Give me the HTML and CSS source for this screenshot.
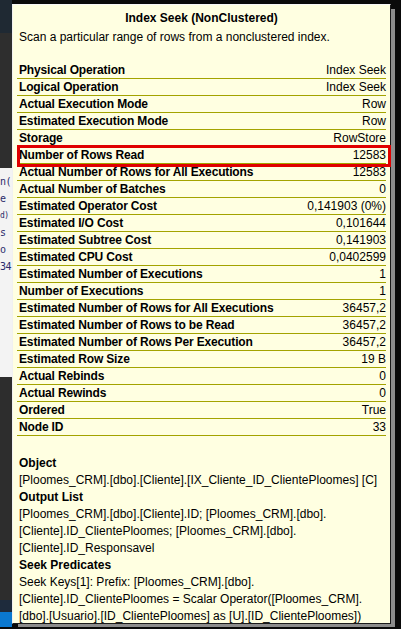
FILE: index.html
```html
<!DOCTYPE html>
<html>
<head>
<meta charset="utf-8">
<link rel="stylesheet" href="styles.css">
</head>
<body>
<div class="screen">
  <div class="backdrop">
    <div class="band band-navy"></div>
    <div class="band band-gray1"></div>
    <div class="band band-code">
      <span>n(</span><span>e</span><span class="small">d)</span><span>s</span><span>o</span><span>34</span>
    </div>
    <div class="band band-gray2"></div>
    <div class="band band-navy2"></div>
    <div class="band band-blue"></div>
  </div>
  <div class="tooltip">
    <div class="title">Index Seek (NonClustered)</div>
    <div class="desc">Scan a particular range of rows from a nonclustered index.</div>
    <div class="props">
      <div class="row"><span class="k">Physical Operation</span><span class="v">Index Seek</span></div>
      <div class="row"><span class="k">Logical Operation</span><span class="v">Index Seek</span></div>
      <div class="row"><span class="k">Actual Execution Mode</span><span class="v">Row</span></div>
      <div class="row"><span class="k">Estimated Execution Mode</span><span class="v">Row</span></div>
      <div class="row"><span class="k">Storage</span><span class="v">RowStore</span></div>
      <div class="row marked"><span class="k">Number of Rows Read</span><span class="v">12583</span></div>
      <div class="row"><span class="k">Actual Number of Rows for All Executions</span><span class="v">12583</span></div>
      <div class="row"><span class="k">Actual Number of Batches</span><span class="v">0</span></div>
      <div class="row"><span class="k">Estimated Operator Cost</span><span class="v">0,141903 (0%)</span></div>
      <div class="row"><span class="k">Estimated I/O Cost</span><span class="v">0,101644</span></div>
      <div class="row"><span class="k">Estimated Subtree Cost</span><span class="v">0,141903</span></div>
      <div class="row"><span class="k">Estimated CPU Cost</span><span class="v">0,0402599</span></div>
      <div class="row"><span class="k">Estimated Number of Executions</span><span class="v">1</span></div>
      <div class="row"><span class="k">Number of Executions</span><span class="v">1</span></div>
      <div class="row"><span class="k">Estimated Number of Rows for All Executions</span><span class="v">36457,2</span></div>
      <div class="row"><span class="k">Estimated Number of Rows to be Read</span><span class="v">36457,2</span></div>
      <div class="row"><span class="k">Estimated Number of Rows Per Execution</span><span class="v">36457,2</span></div>
      <div class="row"><span class="k">Estimated Row Size</span><span class="v">19 B</span></div>
      <div class="row"><span class="k">Actual Rebinds</span><span class="v">0</span></div>
      <div class="row"><span class="k">Actual Rewinds</span><span class="v">0</span></div>
      <div class="row"><span class="k">Ordered</span><span class="v">True</span></div>
      <div class="row"><span class="k">Node ID</span><span class="v">33</span></div>
    </div>
    <div class="section">
      <div class="sh">Object</div>
      <div class="st">[Ploomes_CRM].[dbo].[Cliente].[IX_Cliente_ID_ClientePloomes] [C]</div>
      <div class="sh">Output List</div>
      <div class="st">[Ploomes_CRM].[dbo].[Cliente].ID; [Ploomes_CRM].[dbo].<br>[Cliente].ID_ClientePloomes; [Ploomes_CRM].[dbo].<br>[Cliente].ID_Responsavel</div>
      <div class="sh">Seek Predicates</div>
      <div class="st">Seek Keys[1]: Prefix: [Ploomes_CRM].[dbo].<br>[Cliente].ID_ClientePloomes = Scalar Operator([Ploomes_CRM].<br>[dbo].[Usuario].[ID_ClientePloomes] as [U].[ID_ClientePloomes])</div>
    </div>
  </div>
</div>
</body>
</html>
```

FILE: styles.css
```css
html, body {
  margin: 0;
  padding: 0;
  background: #0a0a0a;
  width: 401px;
  height: 629px;
  overflow: hidden;
}

.screen {
  display: grid;
  grid-template-columns: 12px 379px 1fr;
  height: 629px;
}

.backdrop {
  display: flex;
  flex-direction: column;
  height: 627px;
  overflow: hidden;
}

.band { flex: none; }
.band-navy { height: 33px; background: #1f2933; }
.band-gray1 { height: 135px; background: #2e2e2e; }
.band-code {
  height: 209px;
  background: #f3f3f3;
  display: flex;
  flex-direction: column;
  padding-top: 5px;
  box-sizing: border-box;
  font-family: "DejaVu Sans Mono", monospace;
  font-size: 10px;
  letter-spacing: -0.5px;
  line-height: 17px;
  color: #2b2b6b;
  white-space: nowrap;
}
.band-code .small { font-size: 8px; }
.band-gray2 { height: 223px; background: #2d2d2d; }
.band-navy2 { height: 12px; background: #1e2b3c; }
.band-blue { height: 15px; background: #0a78d0; }

.tooltip {
  margin-top: 4px;
  height: 620px;
  box-sizing: border-box;
  background: #ffffe1;
  border-top: 1px solid #f8f8f8;
  border-left: 1px solid #f0f0f0;
  border-right: 1px solid #1a1a1a;
  border-bottom: 1px solid #1a1a1a;
  box-shadow: 5px 4px 0 -1px #8c8c8c;
  padding: 5px 4px 0 4px;
  font-family: "Liberation Sans", Arial, sans-serif;
  font-size: 12px;
  color: #000;
}

.title {
  text-align: center;
  font-weight: bold;
  line-height: 16px;
}

.desc {
  line-height: 16px;
  padding-left: 2px;
  margin-top: 3px;
}

.props {
  margin-top: 17px;
}

.row {
  display: flex;
  justify-content: space-between;
  height: 16px;
  line-height: 16px;
  border-bottom: 1px solid #a3a300;
  padding: 0 0 0 2px;
  position: relative;
}

.row .k {
  font-weight: bold;
  letter-spacing: -0.15px;
}

.row.marked::after {
  content: "";
  position: absolute;
  top: -2px;
  bottom: -4px;
  left: 0;
  right: -5px;
  border: 3px solid #e00000;
}

.section {
  margin-top: 19px;
  padding-left: 2px;
}

.sh {
  font-weight: bold;
  line-height: 17px;
}

.st {
  line-height: 17px;
  white-space: nowrap;
}
```
